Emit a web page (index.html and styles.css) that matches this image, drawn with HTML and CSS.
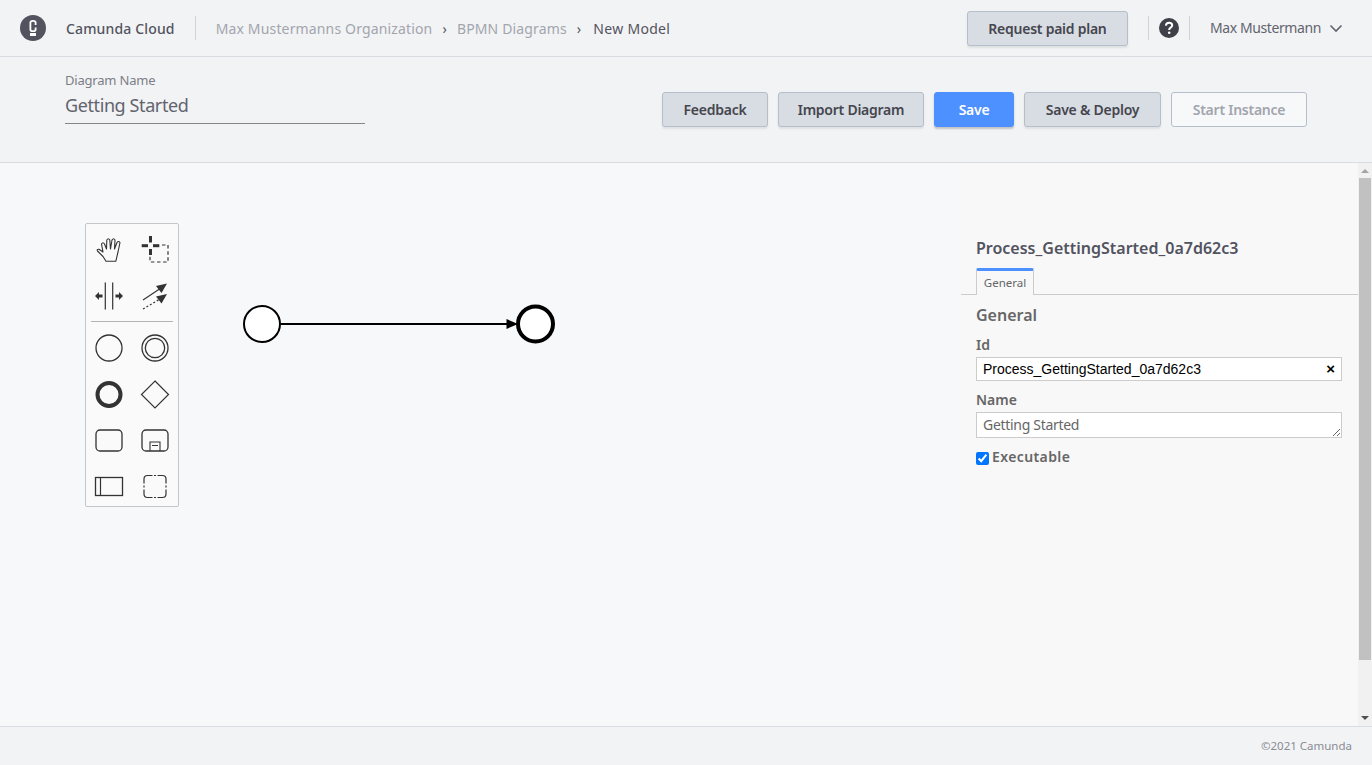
FILE: index.html
```html
<!DOCTYPE html>
<html>

	<head>
		<meta charset="utf-8">
		<title>New Model</title>
		<link rel="stylesheet" href="styles.css">
	</head>

	<body>
		<div class="page">
			<header class="topbar">
				<svg class="logo" width="26" height="26" viewBox="0 0 26 26">
					<circle cx="13" cy="13" r="13" fill="#52535f"/>
					<path d="M15.6 10 V7.6 Q15.6 5.8 13 5.8 Q10.4 5.8 10.4 7.6 V14.4 Q10.4 16.2 13 16.2 Q15.6 16.2 15.6 14.4 V12.6" fill="none" stroke="#fff" stroke-width="1.8"/>
					<rect x="10" y="18" width="6" height="3" fill="#fff"/>
				</svg>
				<span class="brand">Camunda Cloud</span>
				<span class="divider brand-divider"></span>
				<nav class="crumbs">
					<a href="#">Max Mustermanns Organization</a>
					<span class="crumb-sep">›</span>
					<a href="#">BPMN Diagrams</a>
					<span class="crumb-sep">›</span>
					<span class="crumb-current">New Model</span>
				</nav>
				<button class="btn btn-paid">Request paid plan</button>
				<span class="divider help-left"></span>
				<svg class="help" width="20" height="20" viewBox="0 0 20 20">
					<circle cx="10" cy="10" r="10" fill="#3f4048"/>
					<path d="M6.9 7.6 Q7 4.7 10.1 4.7 Q13.2 4.7 13.2 7.3 Q13.2 8.8 11.6 9.7 Q10.2 10.5 10.2 12" fill="none" stroke="#fff" stroke-width="2"/>
					<circle cx="10.2" cy="14.8" r="1.3" fill="#fff"/>
				</svg>
				<span class="divider help-right"></span>
				<span class="user">Max Mustermann</span>
				<svg class="chevron" width="14" height="9" viewBox="0 0 14 9">
					<path d="M1.5 1.5 L7 7 L12.5 1.5" fill="none" stroke="#62636d" stroke-width="1.6"/>
				</svg>
			</header>

			<section class="toolbar">
				<div class="diagram-name">
					<label class="name-label">Diagram Name</label>
					<div class="name-value">Getting Started</div>
				</div>
				<div class="actions">
					<button class="btn btn-feedback">Feedback</button>
					<button class="btn btn-import">Import Diagram</button>
					<button class="btn btn-primary">Save</button>
					<button class="btn btn-deploy">Save &amp; Deploy</button>
					<button class="btn btn-disabled">Start Instance</button>
				</div>
			</section>

			<main class="workspace">
				<div class="canvas">
					<!-- 流程图 -->
					<svg class="diagram" width="330" height="60" viewBox="0 0 330 60">
						<line x1="46" y1="29" x2="274" y2="29" stroke="#000" stroke-width="2"/>
						<path d="M271.5 24 L283 29 L271.5 34 Z" fill="#000"/>
						<circle cx="27" cy="29" r="18" fill="#fff" stroke="#000" stroke-width="2"/>
						<circle cx="300.5" cy="29" r="17.5" fill="#fff" stroke="#000" stroke-width="4"/>
					</svg>

					<div class="palette">
						<div class="tool-row">
							<svg class="tool" viewBox="-18 -18 36 36">
								<path d="M-3 11.3 L-6 6.5 L-11.5 1 Q-12.5 -1 -10 -0.8 L-6 2 L-7.5 -6 Q-6 -8.5 -4.5 -6 L-2.5 -1 L-2.2 -10 Q-0.7 -12.5 0.8 -10 L1.5 -1 L3 -10 Q4.5 -12.5 6 -10 L5.5 -1 L8 -7.5 Q9.5 -9.5 11 -7.5 L9 2 L6.8 11.3 Z" fill="none" stroke="#333" stroke-width="1.1" stroke-linejoin="round"/>
							</svg>
							<svg class="tool" viewBox="-18 -18 36 36">
								<rect x="-6" y="-14" width="3" height="6.5" fill="#333"/>
								<rect x="-6" y="-1" width="3" height="6" fill="#333"/>
								<rect x="-13.3" y="-5.8" width="6.3" height="3" fill="#333"/>
								<rect x="-2" y="-5.8" width="6.3" height="3" fill="#333"/>
								<path d="M7 -5 H13 V12 H-5 V6" fill="none" stroke="#333" stroke-width="1.2" stroke-dasharray="3.5 2.6"/>
							</svg>
						</div>
						<div class="tool-row">
							<svg class="tool" viewBox="-18 -18 36 36">
								<path d="M-3.7 -13.5 V13.5 M3.7 -13.5 V13.5" stroke="#333" stroke-width="1.2"/>
								<path d="M-14 0 L-10 -4 V-1.5 H-6.5 V1.5 H-10 V4 Z M14 0 L10 -4 V-1.5 H6.5 V1.5 H10 V4 Z" fill="#333"/>
							</svg>
							<svg class="tool" viewBox="-18 -18 36 36">
								<path d="M-12 4 L6 -8" stroke="#333" stroke-width="1.2"/>
								<path d="M12 -12.5 L1 -10 L6.5 -3 Z" fill="#333"/>
								<path d="M-12 13 L5 3" stroke="#333" stroke-width="1.2" stroke-dasharray="2 2"/>
								<path d="M12 -2 L1 .5 L6.5 7.5 Z" fill="#333"/>
							</svg>
						</div>
						<div class="palette-sep"></div>
						<div class="tool-row">
							<svg class="tool" viewBox="-18 -18 36 36">
								<circle r="13" fill="none" stroke="#333" stroke-width="1.3"/>
							</svg>
							<svg class="tool" viewBox="-18 -18 36 36">
								<circle r="13" fill="none" stroke="#333" stroke-width="1.3"/>
								<circle r="9.7" fill="none" stroke="#333" stroke-width="1.3"/>
							</svg>
						</div>
						<div class="tool-row">
							<svg class="tool" viewBox="-18 -18.5 36 36">
								<circle r="11.5" fill="none" stroke="#333" stroke-width="4"/>
							</svg>
							<svg class="tool" viewBox="-18 -18.5 36 36">
								<path d="M0 -13.5 L13.5 0 L0 13.5 L-13.5 0 Z" fill="none" stroke="#333" stroke-width="1.2"/>
							</svg>
						</div>
						<div class="tool-row">
							<svg class="tool" viewBox="-18 -18.5 36 36">
								<rect x="-13" y="-10.5" width="26" height="21" rx="4" fill="none" stroke="#333" stroke-width="1.3"/>
							</svg>
							<svg class="tool" viewBox="-18 -18.5 36 36">
								<rect x="-13" y="-10.5" width="26" height="21" rx="4" fill="none" stroke="#333" stroke-width="1.3"/>
								<path d="M-5 10.5 V1.5 H5 V10.5 M-3 5 H3" fill="none" stroke="#333" stroke-width="1.1"/>
							</svg>
						</div>
						<div class="tool-row">
							<svg class="tool" viewBox="-18 -18.5 36 36">
								<rect x="-13.5" y="-9" width="27" height="18" fill="none" stroke="#333" stroke-width="1.3"/>
								<path d="M-8.5 -9 V9" stroke="#333" stroke-width="1.2"/>
							</svg>
							<svg class="tool" viewBox="-18 -18.5 36 36">
								<path d="M-11 -3 V-7.5 Q-11 -11 -7.5 -11 H-2.5 M-1 -11 H1 M2.5 -11 H7.5 Q11 -11 11 -7.5 V-3 M11 -1 V1 M11 3 V7.5 Q11 11 7.5 11 H2.5 M1 11 H-1 M-2.5 11 H-7.5 Q-11 11 -11 7.5 V3 M-11 1 V-1" fill="none" stroke="#333" stroke-width="1.2"/>
							</svg>
						</div>
					</div>
				</div>

				<aside class="props">
					<h2 class="props-title">Process_GettingStarted_0a7d62c3</h2>
					<div class="tabs">
						<a class="tab" href="#">General</a>
					</div>
					<div class="props-body">
						<h3 class="group-title">General</h3>
						<label class="field-label">Id</label>
						<div class="id-input">
							<input class="text-input" type="text" value="Process_GettingStarted_0a7d62c3">
							<span class="clear">×</span>
						</div>
						<label class="field-label">Name</label>
						<textarea class="name-area">Getting Started</textarea>
						<label class="check-row">
							<input class="check" type="checkbox" checked>
							<span>Executable</span>
						</label>
					</div>
				</aside>

				<div class="scrollbar">
					<span class="arrow-up"></span>
					<div class="thumb"></div>
					<span class="arrow-down"></span>
				</div>
			</main>

			<footer class="footer">©2021 Camunda</footer>
		</div>
	</body>

</html>
```

FILE: styles.css
```css
* {
	box-sizing: border-box;
}
html, body {
	height: 100%;
	margin: 0;
	overflow: hidden;
}
body {
	font-family: "Noto Sans", "Liberation Sans", sans-serif;
	color: #45464e;
	background: #f2f3f5;
}
.page {
	display: flex;
	flex-direction: column;
	height: 765px;
}

/* top bar */
.topbar {
	display: flex;
	align-items: center;
	height: 57px;
	padding: 0 29px 0 20px;
	border-bottom: 1px solid #d8dce3;
	font-size: 14px;
	flex: none;
}
.brand {
	margin-left: 20px;
	padding-top: 1px;
	font-weight: 500;
	letter-spacing: .15px;
	color: #52535f;
}
.divider {
	width: 1px;
	height: 24px;
	background: #d0d2d6;
}
.brand-divider {
	margin-left: 20px;
}
.crumbs {
	display: flex;
	align-items: center;
	margin-left: 20px;
	padding-top: 1px;
	letter-spacing: .15px;
	flex: 1;
}
.crumbs a {
	color: #a2a5ad;
	text-decoration: none;
}
.crumb-sep {
	margin: 0 10px;
	color: #52535f;
}
.crumb-current {
	margin-left: 2px;
	letter-spacing: .3px;
	color: #52535f;
}
.help-left {
	margin-left: 20px;
}
.help {
	margin-left: 10px;
}
.help-right {
	margin-left: 10px;
}
.user {
	margin-left: 20px;
	padding-bottom: 1px;
	letter-spacing: -.4px;
	color: #62636d;
}
.chevron {
	margin-left: 8px;
}

/* buttons */
.btn {
	height: 35px;
	padding: 0;
	border: 1px solid #b5bfcb;
	border-radius: 3px;
	background: #d8dce3;
	box-shadow: 0 2px 2px rgba(0, 0, 0, .08);
	color: #45464e;
	font-family: inherit;
	font-size: 14px;
	font-weight: 600;
	letter-spacing: -.25px;
}
.btn-paid {
	width: 161px;
}
.btn-feedback {
	width: 106px;
}
.btn-import {
	width: 146px;
}
.btn-primary {
	width: 80px;
	border-color: #4d90ff;
	background: #4d90ff;
	color: #fff;
	box-shadow: 0 2px 2px rgba(0, 0, 0, .2);
}
.btn-deploy {
	width: 137px;
}
.btn-disabled {
	width: 136px;
	background: #f7f8fa;
	color: #a2a5ad;
	box-shadow: none;
}

/* diagram name + actions */
.toolbar {
	display: flex;
	align-items: flex-start;
	justify-content: space-between;
	height: 106px;
	padding: 0 65px;
	border-bottom: 1px solid #d8dce3;
	flex: none;
}
.diagram-name {
	width: 300px;
	padding-top: 14px;
}
.name-label {
	display: block;
	height: 18px;
	font-size: 13px;
	line-height: 18px;
	letter-spacing: -.2px;
	color: #7c7e87;
}
.name-value {
	height: 35px;
	padding-top: 4px;
	border-bottom: 1px solid #85868c;
	font-size: 18px;
	line-height: 24px;
	letter-spacing: -.4px;
	color: #62636d;
}
.actions {
	display: flex;
	gap: 10px;
	padding-top: 35px;
}

/* main */
.workspace {
	display: flex;
	flex: 1;
	min-height: 0;
	background: #f7f8fa;
}
.canvas {
	position: relative;
	flex: 1;
}
.diagram {
	position: absolute;
	left: 235px;
	top: 132px;
}
.palette {
	position: absolute;
	left: 85px;
	top: 60px;
	width: 94px;
	height: 284px;
	padding: 8px 5px 0;
	border: 1px solid #c4c6cc;
	border-radius: 2px;
	background: #fafafa;
}
.tool-row {
	display: flex;
	gap: 10px;
	margin-bottom: 10px;
}
.tool {
	display: block;
	width: 36px;
	height: 36px;
}
.palette-sep {
	height: 1px;
	margin: -3px 0 8px;
	background: #b4b4b4;
}

/* properties panel */
.props {
	width: 397px;
	padding-top: 74px;
	background: #f8f8f8;
	flex: none;
}
.props-title {
	margin: 0 0 9px 15px;
	font-size: 16px;
	line-height: 22px;
	font-weight: 600;
	color: #52535f;
}
.tabs {
	display: flex;
	height: 27px;
	padding-left: 15px;
	border-bottom: 1px solid #ccc;
}
.tab {
	width: 58px;
	height: 27px;
	padding-top: 4px;
	border: 1px solid #ccc;
	border-top: 3px solid #4d90ff;
	border-bottom: 0;
	border-radius: 2px 2px 0 0;
	background: #f8f8f8;
	font-size: 11.5px;
	line-height: 16px;
	text-align: center;
	text-decoration: none;
	color: #666;
}
.props-body {
	padding: 9px 16px 0 15px;
}
.group-title {
	margin: 0 0 9px;
	font-size: 16px;
	line-height: 22px;
	font-weight: 600;
	color: #666;
}
.field-label {
	display: block;
	height: 22px;
	font-size: 14px;
	line-height: 20px;
	font-weight: 600;
	color: #666;
}
.id-input {
	position: relative;
	margin-bottom: 9px;
}
.text-input {
	display: block;
	width: 100%;
	height: 24px;
	padding: 0 6px;
	border: 1px solid #ccc;
	border-radius: 0;
	outline: 0;
	background: #fff;
	font-family: "Liberation Sans", Arial, sans-serif;
	font-size: 14px;
	color: #000;
}
.clear {
	position: absolute;
	right: 7px;
	top: 2px;
	font-family: "Liberation Sans", Arial, sans-serif;
	font-size: 15px;
	line-height: 20px;
	font-weight: 700;
	color: #000;
}
.name-area {
	display: block;
	width: 100%;
	height: 26px;
	margin: 0;
	padding: 2px 6px;
	border: 1px solid #ccc;
	border-radius: 0;
	outline: 0;
	background: #fff;
	font-family: inherit;
	font-size: 14px;
	line-height: 19px;
	letter-spacing: -.3px;
	color: #666;
}
.check-row {
	display: flex;
	align-items: center;
	gap: 3px;
	margin-top: 9px;
	font-size: 14px;
	line-height: 20px;
	font-weight: 600;
	letter-spacing: .4px;
	color: #666;
}
.check {
	width: 13px;
	height: 13px;
	margin: 2px 0 0;
}

/* scrollbar */
.scrollbar {
	display: flex;
	flex-direction: column;
	align-items: center;
	width: 14px;
	padding: 6px 1px;
	background: #f1f1f1;
	flex: none;
}
.arrow-up, .arrow-down {
	width: 0;
	height: 0;
	border-left: 4px solid transparent;
	border-right: 4px solid transparent;
	flex: none;
}
.arrow-up {
	border-bottom: 4px solid #a3a3a3;
}
.arrow-down {
	margin-top: auto;
	border-top: 4px solid #505050;
}
.thumb {
	width: 12px;
	height: 482px;
	margin-top: 5px;
	background: #c1c1c1;
}

/* footer */
.footer {
	height: 39px;
	padding: 0 20px;
	border-top: 1px solid #d8dce3;
	font-size: 11.5px;
	line-height: 38px;
	text-align: right;
	color: #8a8c94;
	flex: none;
}
```
